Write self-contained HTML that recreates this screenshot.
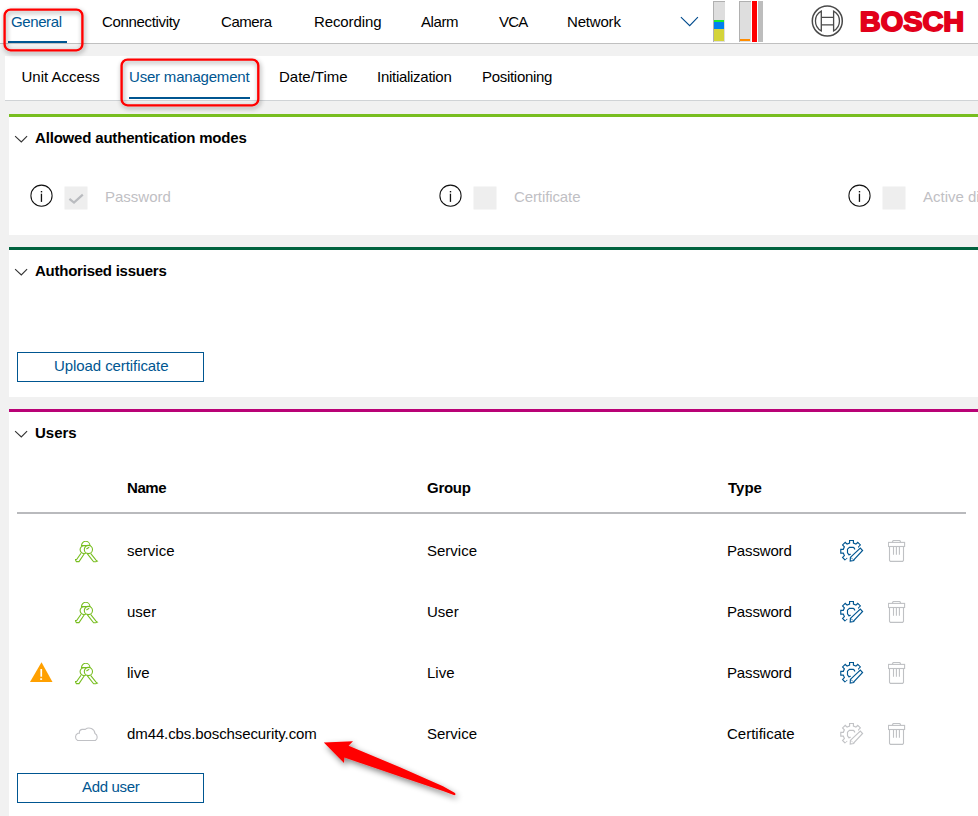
<!DOCTYPE html>
<html><head><meta charset="utf-8">
<style>
*{margin:0;padding:0;box-sizing:border-box}
html,body{width:978px;height:816px;overflow:hidden;background:#f1f1f1;font-family:"Liberation Sans",sans-serif;font-size:15px;color:#000}
.a{position:absolute;white-space:nowrap;line-height:15px}
.b{font-weight:bold}
.blue{color:#005691}
.gray{color:#bfc0c4}
#hdr{position:absolute;left:0;top:0;width:978px;height:44px;background:#fff;border-bottom:1px solid #c0c0c0}
#sub{position:absolute;left:5px;top:56px;width:973px;height:45px;background:#fff;border-bottom:1px solid #d0d3d6}
.panel{position:absolute;left:9px;width:969px;background:#fff}
.ul{position:absolute;height:2px;background:#005691}
.redbox{position:absolute;border:2px solid #e8000d;border-radius:7px;box-shadow:1px 2px 4px rgba(0,0,0,.35)}
.btn{position:absolute;border:1px solid #005691;background:#fff}
</style></head><body>

<div id="hdr"></div>
<div class="a" style="left:11.0px;top:14px;letter-spacing:-0.4px"><span class="blue">General</span></div>
<div class="a" style="left:102.0px;top:14px;letter-spacing:-0.33px">Connectivity</div>
<div class="a" style="left:221.0px;top:14px;letter-spacing:-0.45px">Camera</div>
<div class="a" style="left:314.0px;top:14px;letter-spacing:-0.1px">Recording</div>
<div class="a" style="left:421px;top:14px;letter-spacing:-0.4px">Alarm</div>
<div class="a" style="left:499px;top:14px;letter-spacing:-0.8px">VCA</div>
<div class="a" style="left:567.0px;top:14px;letter-spacing:-0.18px">Network</div>
<div class="ul" style="left:8px;top:41px;width:59px"></div>
<svg class="a" style="left:670px;top:5px" width="40" height="35"><polyline points="10.9,12.2 19.7,20.6 27.9,12.2" fill="none" stroke="#004b8d" stroke-width="1.15"/></svg>

<!-- level bars -->
<svg class="a" style="left:700px;top:0" width="80" height="44">
 <rect x="13" y="1" width="12" height="41" fill="#dedede"/>
 <rect x="13" y="1" width="12" height="1" fill="#b0b0b0"/>
 <rect x="13" y="1" width="1" height="41" fill="#b0b0b0"/>
 <rect x="14" y="20" width="10" height="2" fill="#1ee82e"/>
 <rect x="14" y="22" width="10" height="7" fill="#0080f0"/>
 <rect x="14" y="29" width="10" height="12" fill="#d4d43a"/>
 <rect x="39" y="1" width="12" height="41" fill="#dedede"/>
 <rect x="39" y="1" width="12" height="1" fill="#b0b0b0"/>
 <rect x="39" y="1" width="1" height="41" fill="#b0b0b0"/>
 <rect x="40" y="39" width="10" height="2" fill="#ff8c00"/>
 <rect x="52" y="1" width="5" height="41" fill="#ff0000"/>
 <rect x="58" y="1" width="5" height="41" fill="#bdbdbd"/>
</svg>

<!-- bosch logo -->
<svg class="a" style="left:800px;top:0" width="178" height="44">
 <g fill="none" stroke="#4a4a4a">
 <circle cx="27.3" cy="21" r="15" stroke-width="1.5"/>
 <path d="M21.3 11.1 A11.3 11.3 0 0 0 21.3 30.9 Z M33.6 11.1 A11.3 11.3 0 0 1 33.6 30.9 Z" stroke-width="1.3"/>
 <path d="M21.3 17.4 H33.6 M21.3 24.8 H33.6" stroke-width="1.3"/>
 </g>
 <text x="59.8" y="30.9" font-family="Liberation Sans" font-weight="bold" font-size="27" fill="#e2001a" stroke="#e2001a" stroke-width="1.8" stroke-linejoin="round" textLength="104.4" lengthAdjust="spacingAndGlyphs">BOSCH</text>
</svg>

<div id="sub"></div>
<div class="a" style="left:21.5px;top:69px;letter-spacing:0px">Unit Access</div>
<div class="a blue" style="left:129.0px;top:69px;letter-spacing:-0.2px">User management</div>
<div class="a" style="left:279.0px;top:69px;letter-spacing:0px">Date/Time</div>
<div class="a" style="left:377.0px;top:69px;letter-spacing:-0.28px">Initialization</div>
<div class="a" style="left:482.0px;top:69px;letter-spacing:-0.3px">Positioning</div>
<div class="ul" style="left:129px;top:97px;width:121px"></div>

<!-- section 1 -->
<div class="panel" style="top:114px;height:121px;border-top:3px solid #78be20"></div>
<svg class="a" style="left:0;top:120px" width="40" height="30"><polyline points="15.1,16.1 21.3,21.9 27.1,16.1" fill="none" stroke="#333" stroke-width="1.1"/></svg>
<div class="a b" style="left:35.0px;top:130px;letter-spacing:-0.18px">Allowed authentication modes</div>

<svg class="a" style="left:20px;top:180px" width="960" height="32">
 <g id="r1">
 <circle cx="21.5" cy="15.7" r="10.6" fill="none" stroke="#111" stroke-width="1.05"/>
 <rect x="20.8" y="11" width="1.4" height="1.4" fill="#111"/><rect x="20.8" y="13.7" width="1.3" height="8.2" fill="#111"/>
 </g>
 <rect x="44.5" y="6.5" width="23" height="23" fill="#eeeeee"/>
 <polyline points="49.4,18.9 54,22.6 62.8,14.6" fill="none" stroke="#b9bbbf" stroke-width="2.2"/>
 <use href="#r1" x="409"/>
 <rect x="453.5" y="6.5" width="23" height="23" fill="#eeeeee"/>
 <use href="#r1" x="818"/>
 <rect x="862.5" y="6.5" width="23" height="23" fill="#eeeeee"/>
</svg>
<div class="a gray" style="left:105px;top:189px">Password</div>
<div class="a gray" style="left:514px;top:189px;letter-spacing:-0.1px">Certificate</div>
<div class="a gray" style="left:923px;top:189px">Active directory</div>

<!-- section 2 -->
<div class="panel" style="top:247px;height:150px;border-top:3px solid #00623e"></div>
<svg class="a" style="left:0;top:253px" width="40" height="30"><polyline points="15.1,16.1 21.3,21.9 27.1,16.1" fill="none" stroke="#333" stroke-width="1.1"/></svg>
<div class="a b" style="left:35.0px;top:263px;letter-spacing:-0.24px">Authorised issuers</div>
<div class="btn" style="left:17px;top:352px;width:187px;height:30px"></div>
<div class="a blue" style="left:54.0px;top:358px;letter-spacing:-0.08px">Upload certificate</div>

<!-- section 3 -->
<div class="panel" style="top:409px;height:407px;border-top:3px solid #b90276"></div>
<svg class="a" style="left:0;top:415px" width="40" height="30"><polyline points="15.1,16.1 21.3,21.9 27.1,16.1" fill="none" stroke="#333" stroke-width="1.1"/></svg>
<div class="a b" style="left:35px;top:425px">Users</div>

<div class="a b" style="left:127.0px;top:480px;letter-spacing:-0.4px">Name</div>
<div class="a b" style="left:427.0px;top:480px;letter-spacing:-0.27px">Group</div>
<div class="a b" style="left:728px;top:480px;letter-spacing:0px">Type</div>
<div class="a" style="left:17px;top:512px;width:949px;height:2px;background:#b9babd"></div>

<svg width="0" height="0" style="position:absolute">
 <defs>
  <g id="key" fill="none" stroke="#78be20" stroke-width="1.1">
   <path d="M6.5 4.5 A4.2 4.2 0 0 1 14.9 4.5 Z"/>
   <circle cx="9" cy="8.6" r="3.9"/>
   <circle cx="13.4" cy="8.5" r="4.1" fill="#fff"/>
   <path d="M11.4 8 L14.2 6.3"/>
   <path d="M6 12.2 L1.8 18.2 L0.3 18.6 L1.4 20.6 L4 20.6 L9.3 12.8"/>
   <path d="M15.6 12.4 L21 19.2 L22.3 20.2 L20.8 20.8 L18.6 20.8 L12.4 12.8"/>
  </g>
  <clipPath id="gclip"><polygon points="0,0 30,0 30,4.6 0,33.2"/></clipPath>
  <g id="gear" fill="none" stroke-width="1.15" stroke-linejoin="miter">
   <path clip-path="url(#gclip)" d="M23.68 17.10 L26.23 17.10 L26.23 13.30 L23.68 13.30 L22.63 10.76 L24.43 8.95 L21.75 6.27 L19.94 8.07 L17.40 7.02 L17.40 4.47 L13.60 4.47 L13.60 7.02 L11.06 8.07 L9.25 6.27 L6.57 8.95 L8.37 10.76 L7.32 13.30 L4.77 13.30 L4.77 17.10 L7.32 17.10 L8.37 19.64 L6.57 21.45 L9.25 24.13 L11.06 22.33 L13.60 23.38 L13.60 25.93 L17.40 25.93 L17.40 23.38 L19.94 22.33 L21.75 24.13 L24.43 21.45 L22.63 19.64 Z"/>
   <path d="M18.9 13.6 L18.3 12.2 L17.3 11.3 H13.4 L11.5 13.2 V16.8 L13.4 19.3 M12.6 18.6 L14.8 18.3"/>
   <path d="M14.4 21.4 L24.3 12.1 L26.6 14.5 L18.3 23.4 L17.7 24.5 L14.2 25 Z"/>
   <path d="M14.4 21.4 L17.8 23.8" stroke-width="0.6"/>
  </g>
  <g id="trash" fill="none" stroke="#bfc1c4" stroke-width="1.1">
   <path d="M4.3 2.2 L5.2 0.4 H11.8 L12.7 2.2"/>
   <rect x="0.4" y="2.4" width="16.2" height="4.1"/>
   <path d="M1.5 6.5 V20.4 L2.3 21.4 H14.7 L15.5 20.4 V6.5"/>
   <path d="M5.5 6.5 V14.8 M8.4 6.5 V14.8 M11.4 6.5 V14.8"/>
  </g>
 </defs>
</svg>

<!-- rows -->
<svg class="a" style="left:75px;top:541px" width="24" height="22"><use href="#key"/></svg>
<div class="a" style="left:127px;top:543px">service</div>
<div class="a" style="left:427px;top:543px">Service</div>
<div class="a" style="left:727px;top:543px;letter-spacing:-0.15px">Password</div>
<svg class="a" style="left:836px;top:536px" width="30" height="30" stroke="#005691"><use href="#gear"/></svg>
<svg class="a" style="left:888px;top:540px" width="18" height="23"><use href="#trash"/></svg>

<svg class="a" style="left:75px;top:602px" width="24" height="22"><use href="#key"/></svg>
<div class="a" style="left:127px;top:604px">user</div>
<div class="a" style="left:427px;top:604px">User</div>
<div class="a" style="left:727px;top:604px;letter-spacing:-0.15px">Password</div>
<svg class="a" style="left:836px;top:597px" width="30" height="30" stroke="#005691"><use href="#gear"/></svg>
<svg class="a" style="left:888px;top:601px" width="18" height="23"><use href="#trash"/></svg>

<svg class="a" style="left:28px;top:660px" width="26" height="24"><path d="M13.5 2.3 L24.5 21.9 H2 Z" fill="#ffa000"/><rect x="12.4" y="9" width="1.7" height="7.7" fill="#fff"/><rect x="12.2" y="18.3" width="1.9" height="1.6" fill="#fff"/></svg>
<svg class="a" style="left:75px;top:663px" width="24" height="22"><use href="#key"/></svg>
<div class="a" style="left:127px;top:665px">live</div>
<div class="a" style="left:427px;top:665px">Live</div>
<div class="a" style="left:727px;top:665px;letter-spacing:-0.15px">Password</div>
<svg class="a" style="left:836px;top:658px" width="30" height="30" stroke="#005691"><use href="#gear"/></svg>
<svg class="a" style="left:888px;top:662px" width="18" height="23"><use href="#trash"/></svg>

<svg class="a" style="left:74px;top:724px" width="26" height="20"><path d="M3.6 16.5 A4 4 0 0 1 4 9.3 L5.4 9.2 A3.5 3.5 0 0 1 8 5.4 L11.3 5.4 A6 6 0 0 1 21 9.6 A4 4 0 0 1 21.4 16.5 Z" fill="none" stroke="#c0c1c5" stroke-width="1.1"/></svg>
<div class="a" style="left:127.0px;top:726px;letter-spacing:-0.1px">dm44.cbs.boschsecurity.com</div>
<div class="a" style="left:427px;top:726px">Service</div>
<div class="a" style="left:727px;top:726px">Certificate</div>
<svg class="a" style="left:836px;top:719px" width="30" height="30" stroke="#c2c3c6"><use href="#gear"/></svg>
<svg class="a" style="left:888px;top:723px" width="18" height="23"><use href="#trash"/></svg>

<div class="btn" style="left:17px;top:773px;width:187px;height:30px"></div>
<div class="a blue" style="left:82.0px;top:779px;letter-spacing:-0.33px">Add user</div>

<!-- red annotation boxes -->
<svg class="a" style="left:0;top:0" width="300" height="120">
 <defs><filter id="rs" x="-30%" y="-30%" width="160%" height="160%"><feGaussianBlur in="SourceAlpha" stdDeviation="2.4"/><feOffset dx="0.8" dy="1.5"/><feComponentTransfer><feFuncA type="linear" slope="0.42"/></feComponentTransfer><feMerge><feMergeNode/><feMergeNode in="SourceGraphic"/></feMerge></filter></defs>
 <g fill="none" stroke="#ff0000" stroke-width="2.35" filter="url(#rs)">
  <rect x="4.6" y="9.6" width="77.8" height="40.7" rx="6"/>
  <rect x="121.6" y="59.6" width="136.7" height="45.7" rx="6"/>
 </g>
</svg>

<!-- arrow -->
<svg class="a" style="left:0;top:0;overflow:visible" width="978" height="816">
 <defs><filter id="sh" x="-20%" y="-20%" width="140%" height="140%"><feGaussianBlur in="SourceAlpha" stdDeviation="3"/><feOffset dx="1.5" dy="3"/><feComponentTransfer><feFuncA type="linear" slope="0.5"/></feComponentTransfer><feMerge><feMergeNode/><feMergeNode in="SourceGraphic"/></feMerge></filter></defs>
 <path d="M323.8 742.6 L353 741.2 L348.6 745.8 L400 767.3 L443 786.3 L454.6 792.8 Q456.6 794.6 454.4 795.3 L443 791 L400 776.6 L344.4 757.6 L344 763 Z" fill="#ff0000" filter="url(#sh)"/>
</svg>

</body></html>
